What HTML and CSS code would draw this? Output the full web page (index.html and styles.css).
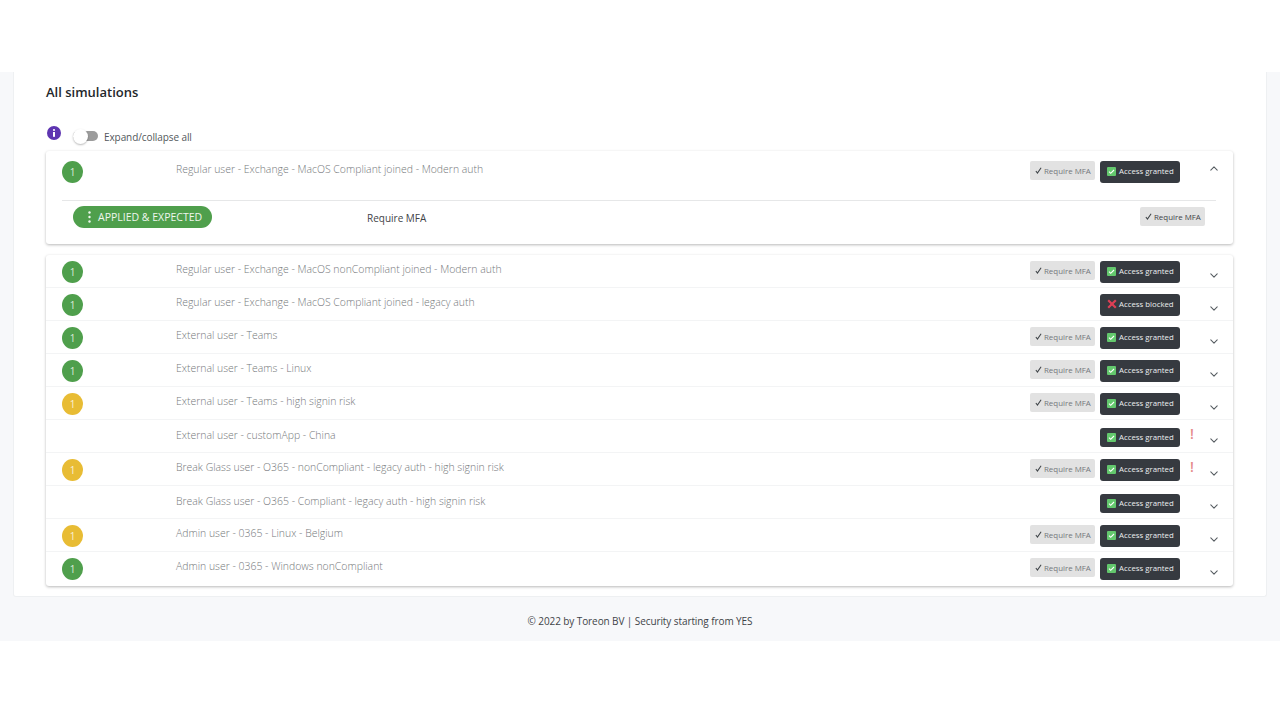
FILE: index.html
```html
<!DOCTYPE html>
<html lang="en">
<head>
<meta charset="utf-8">
<title>All simulations</title>
<link rel="stylesheet" href="styles.css">
</head>
<body>
<svg class="sprites" width="0" height="0" aria-hidden="true">
  <symbol id="chev-down" viewBox="0 0 10 6"><path d="M1 1l4 4 4-4" fill="none" stroke="#555b60" stroke-width="1.3" stroke-linecap="round" stroke-linejoin="round"/></symbol>
  <symbol id="chev-up" viewBox="0 0 10 6"><path d="M1 5l4-4 4 4" fill="none" stroke="#555b60" stroke-width="1.3" stroke-linecap="round" stroke-linejoin="round"/></symbol>
  <symbol id="ok" viewBox="0 0 9 9"><rect width="9" height="9" rx="1" fill="#63c76d"/><path d="M2 4.6l1.7 1.7L7 3" fill="none" stroke="#fff" stroke-width="1.1"/></symbol>
  <symbol id="no" viewBox="0 0 10 10"><path d="M1.2 1.2l7.6 7.6M8.8 1.2L1.2 8.8" fill="none" stroke="#dd3f55" stroke-width="2.2"/></symbol>
  <symbol id="tick" viewBox="0 0 8 8"><path d="M1 4.6l1.8 2.4L7 .8" fill="none" stroke="currentColor" stroke-width="1.2"/></symbol>
</svg>
<main class="page">
  <section class="card">
    <h2 class="heading">All simulations</h2>
    <div class="toolbar">
      <svg class="info" viewBox="0 0 14 14" width="14" height="14"><circle cx="7" cy="7" r="7" fill="#5e35b1"/><circle cx="7" cy="4" r="1.1" fill="#fff"/><rect x="6" y="6" width="2" height="4.8" fill="#fff"/></svg>
      <span class="switch"><span class="knob"></span></span>
      <span class="switch-label">Expand/collapse all</span>
    </div>

    <div class="panel panel--open">
      <div class="row row--head">
        <span class="dot dot--green">1</span>
        <span class="title">Regular user - Exchange - MacOS Compliant joined - Modern auth</span>
        <span class="tags">
          <span class="mfa"><svg class="tick"><use href="#tick"/></svg>Require MFA</span>
          <span class="access"><svg class="ic"><use href="#ok"/></svg>Access granted</span>
          <span class="alert"></span>
          <svg class="chev chev--up"><use href="#chev-up"/></svg>
        </span>
      </div>
      <div class="detail">
        <span class="pill"><svg class="kebab" viewBox="0 0 3 12"><circle cx="1.5" cy="1.5" r="1.2"/><circle cx="1.5" cy="6" r="1.2"/><circle cx="1.5" cy="10.5" r="1.2"/></svg>APPLIED &amp; EXPECTED</span>
        <span class="detail-name">Require MFA</span>
        <span class="mfa mfa--dark"><svg class="tick"><use href="#tick"/></svg>Require MFA</span>
      </div>
    </div>

    <div class="panel">
      <div class="row">
        <span class="dot dot--green">1</span>
        <span class="title">Regular user - Exchange - MacOS nonCompliant joined - Modern auth</span>
        <span class="tags"><span class="mfa"><svg class="tick"><use href="#tick"/></svg>Require MFA</span><span class="access"><svg class="ic"><use href="#ok"/></svg>Access granted</span><span class="alert"></span><svg class="chev"><use href="#chev-down"/></svg></span>
      </div>
      <div class="row">
        <span class="dot dot--green">1</span>
        <span class="title">Regular user - Exchange - MacOS Compliant joined - legacy auth</span>
        <span class="tags"><span class="access"><svg class="ic ic--no"><use href="#no"/></svg>Access blocked</span><span class="alert"></span><svg class="chev"><use href="#chev-down"/></svg></span>
      </div>
      <div class="row">
        <span class="dot dot--green">1</span>
        <span class="title">External user - Teams</span>
        <span class="tags"><span class="mfa"><svg class="tick"><use href="#tick"/></svg>Require MFA</span><span class="access"><svg class="ic"><use href="#ok"/></svg>Access granted</span><span class="alert"></span><svg class="chev"><use href="#chev-down"/></svg></span>
      </div>
      <div class="row">
        <span class="dot dot--green">1</span>
        <span class="title">External user - Teams - Linux</span>
        <span class="tags"><span class="mfa"><svg class="tick"><use href="#tick"/></svg>Require MFA</span><span class="access"><svg class="ic"><use href="#ok"/></svg>Access granted</span><span class="alert"></span><svg class="chev"><use href="#chev-down"/></svg></span>
      </div>
      <div class="row">
        <span class="dot dot--yellow">1</span>
        <span class="title">External user - Teams - high signin risk</span>
        <span class="tags"><span class="mfa"><svg class="tick"><use href="#tick"/></svg>Require MFA</span><span class="access"><svg class="ic"><use href="#ok"/></svg>Access granted</span><span class="alert"></span><svg class="chev"><use href="#chev-down"/></svg></span>
      </div>
      <div class="row row--plain">
        <span class="dot dot--none"></span>
        <span class="title">External user - customApp - China</span>
        <span class="tags"><span class="access access--short"><svg class="ic"><use href="#ok"/></svg>Access granted</span><span class="alert">!</span><svg class="chev"><use href="#chev-down"/></svg></span>
      </div>
      <div class="row">
        <span class="dot dot--yellow">1</span>
        <span class="title">Break Glass user - O365 - nonCompliant - legacy auth - high signin risk</span>
        <span class="tags"><span class="mfa"><svg class="tick"><use href="#tick"/></svg>Require MFA</span><span class="access"><svg class="ic"><use href="#ok"/></svg>Access granted</span><span class="alert">!</span><svg class="chev"><use href="#chev-down"/></svg></span>
      </div>
      <div class="row row--plain">
        <span class="dot dot--none"></span>
        <span class="title">Break Glass user - O365 - Compliant - legacy auth - high signin risk</span>
        <span class="tags"><span class="access access--short"><svg class="ic"><use href="#ok"/></svg>Access granted</span><span class="alert"></span><svg class="chev"><use href="#chev-down"/></svg></span>
      </div>
      <div class="row">
        <span class="dot dot--yellow">1</span>
        <span class="title">Admin user - 0365 - Linux - Belgium</span>
        <span class="tags"><span class="mfa"><svg class="tick"><use href="#tick"/></svg>Require MFA</span><span class="access"><svg class="ic"><use href="#ok"/></svg>Access granted</span><span class="alert"></span><svg class="chev"><use href="#chev-down"/></svg></span>
      </div>
      <div class="row">
        <span class="dot dot--green">1</span>
        <span class="title">Admin user - 0365 - Windows nonCompliant</span>
        <span class="tags"><span class="mfa"><svg class="tick"><use href="#tick"/></svg>Require MFA</span><span class="access"><svg class="ic"><use href="#ok"/></svg>Access granted</span><span class="alert"></span><svg class="chev"><use href="#chev-down"/></svg></span>
      </div>
    </div>
  </section>
  <footer class="footer">© 2022 by Toreon BV | Security starting from YES</footer>
</main>
</body>
</html>
```
FILE: styles.css
```css
* { box-sizing: border-box; }
html, body { margin: 0; height: 720px; overflow: hidden; background: #fff; }
body { font-family: "Open Sans", "Noto Sans", sans-serif; color: #3f4448; }
.sprites { position: absolute; }

.page { margin-top: 72px; height: 569px; background: #f7f8fa; padding: 0 13px; }
.card {
  height: 525px; background: #fff; border: 1px solid #eef0f2; border-top: 0;
  border-radius: 0 0 3px 3px; padding: 0 33px 0 32px;
}
.heading { margin: 0; padding-top: 11px; height: 51px; font-size: 13px; line-height: 19px; font-weight: 600; color: #23272b; }

.toolbar { display: flex; align-items: flex-start; height: 28px; }
.info { margin: 3px 0 0 1px; flex: none; }
.switch { position: relative; width: 25px; height: 10px; margin: 8px 0 0 12px; border-radius: 5px; background: #9c9c9c; flex: none; }
.knob { position: absolute; left: 0; top: -2.5px; width: 15px; height: 15px; border-radius: 50%; background: #fff; box-shadow: 0 1px 2px rgba(0,0,0,.28); }
.switch-label { margin: 7px 0 0 6px; font-size: 10px; line-height: 14px; font-weight: 400; letter-spacing: -.09px; color: #53585c; }

.panel { background: #fff; border-radius: 3px; box-shadow: 0 1px 3px rgba(0,0,0,.28); margin-bottom: 11px; }
.panel--open { height: 93px; }
.panel:last-child { margin-bottom: 0; }

.row { display: flex; align-items: flex-start; height: 33px; padding-left: 16px; border-bottom: 1px solid #f3f4f5; }
.row:last-child { border-bottom: 0; height: 34px; }
.row--head { border-bottom: 0; height: 49px; }
.dot { flex: none; width: 21px; height: 22px; margin-top: 6px; border-radius: 50%; color: rgba(255,255,255,.8); font-size: 10px; line-height: 23px; text-align: center; font-weight: 400; }
.dot--green { background: #4f9f4c; }
.dot--yellow { background: #e8bc34; }
.dot--none { background: none; }
.row--head .dot { margin-top: 10px; }

.title { margin: 7px 0 0 93px; font-size: 10.45px; line-height: 15px; font-weight: 300; color: #75787b; white-space: nowrap; }
.row--head .title { margin-top: 11px; }
.row--plain .title { margin-top: 8px; }

.tags { margin-left: auto; display: flex; align-items: flex-start; padding-right: 15px; }
.mfa { display: flex; align-items: center; width: 65px; height: 19px; margin-top: 6px; padding-left: 5px; border-radius: 2px; background: #e2e2e2; color: #74787c; font-size: 7.9px; white-space: nowrap; }
.mfa--dark { color: #3f4448; }
.tick { width: 7px; height: 7px; margin-right: 2px; color: #3f4448; flex: none; }
.access { display: flex; align-items: center; width: 80px; height: 22px; margin: 6px 0 0 5px; padding: 0 0 2px 7px; border-radius: 3px; background: #363a40; color: #eceef0; font-size: 7.8px; white-space: nowrap; }
.access--short { height: 19px; margin-top: 8px; padding-bottom: 1px; }
.row--head .mfa { margin-top: 10px; }
.row--head .access { margin-top: 10px; }
.ic { width: 9px; height: 9px; margin-right: 3px; flex: none; }
.ic--no { width: 10px; height: 10px; margin-right: 2px; }
.alert { width: 24px; margin-top: 5px; color: #e58a8a; font-size: 14px; line-height: 18px; font-weight: 600; text-align: center; flex: none; }
.chev { width: 8px; height: 5px; margin: 18px 0 0 6px; flex: none; }
.chev--up { margin-top: 15px; }

.detail { display: flex; align-items: flex-start; height: 44px; margin: 0 17px 0 16px; border-top: 1px solid #e6e7e8; padding: 5px 11px 0; }
.pill { display: flex; align-items: center; width: 139px; height: 22px; border-radius: 11px; background: #4f9f4c; color: #eef6ee; font-size: 10.5px; font-weight: 400; white-space: nowrap; }
.kebab { width: 3px; height: 12px; margin: 0 7px 0 15px; fill: #eef6ee; flex: none; }
.detail-name { margin: 5px 0 0 155px; font-size: 10px; line-height: 15px; font-weight: 400; color: #3f4448; }
.detail .mfa { margin: 1px 0 0 auto; }

.footer { padding-top: 17px; text-align: center; font-size: 10px; line-height: 15px; font-weight: 400; letter-spacing: -.09px; color: #3f4448; }
```
